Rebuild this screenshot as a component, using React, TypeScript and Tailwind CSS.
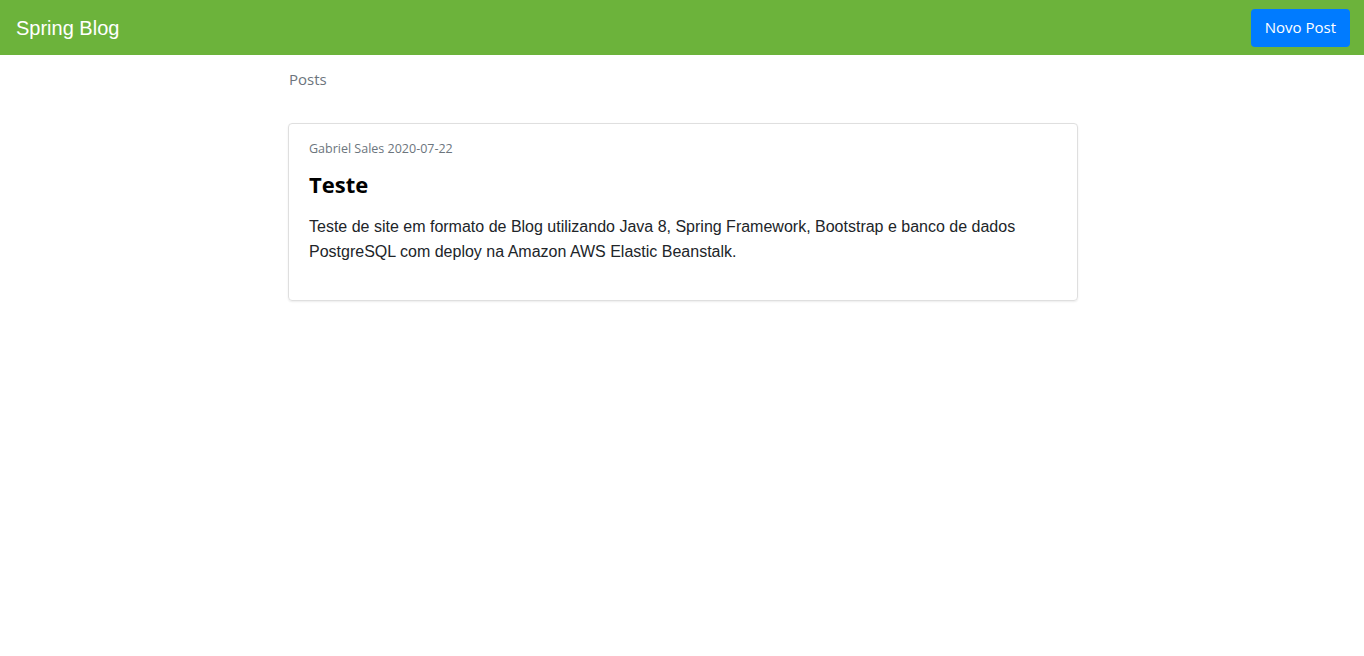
export default function App() {
  return (
    <div className="min-h-screen bg-white">
      <nav className="h-[55px] bg-[#6cb33b] flex items-center justify-between pl-4 pr-[14px]">
        <span className="text-white text-[20px] font-['Liberation_Sans',Arial,sans-serif]">Spring Blog</span>
        <button className="h-[38px] px-[14px] bg-[#007bff] text-white rounded-[4px] text-[15px] font-['Open_Sans',sans-serif]">
          Novo Post
        </button>
      </nav>
      <main className="w-[792px] mx-auto pl-[2px] pt-[12px]">
        <p className="text-[#6c757d] text-[15px] leading-[24px] pl-px font-['Open_Sans',sans-serif]">Posts</p>
        <div className="mt-[32px] border border-[#dfdfdf] rounded-[4px] shadow-[0_1px_2px_rgba(0,0,0,0.08)] px-5 pt-[15px] pb-[36px]">
          <p className="text-[#6c757d] text-[12.5px] leading-[20px] font-['Open_Sans',sans-serif]">Gabriel Sales 2020-07-22</p>
          <h2 className="mt-[11px] text-[22px] leading-[28px] font-bold text-black font-['Open_Sans',sans-serif]">Teste</h2>
          <p className="mt-[16px] text-[16px] leading-[25px] text-[#212529] font-['Liberation_Sans',Arial,sans-serif]">
            Teste de site em formato de Blog utilizando Java 8, Spring Framework, Bootstrap e banco de dados PostgreSQL com deploy na Amazon AWS Elastic Beanstalk.
          </p>
        </div>
      </main>
    </div>
  );
}
